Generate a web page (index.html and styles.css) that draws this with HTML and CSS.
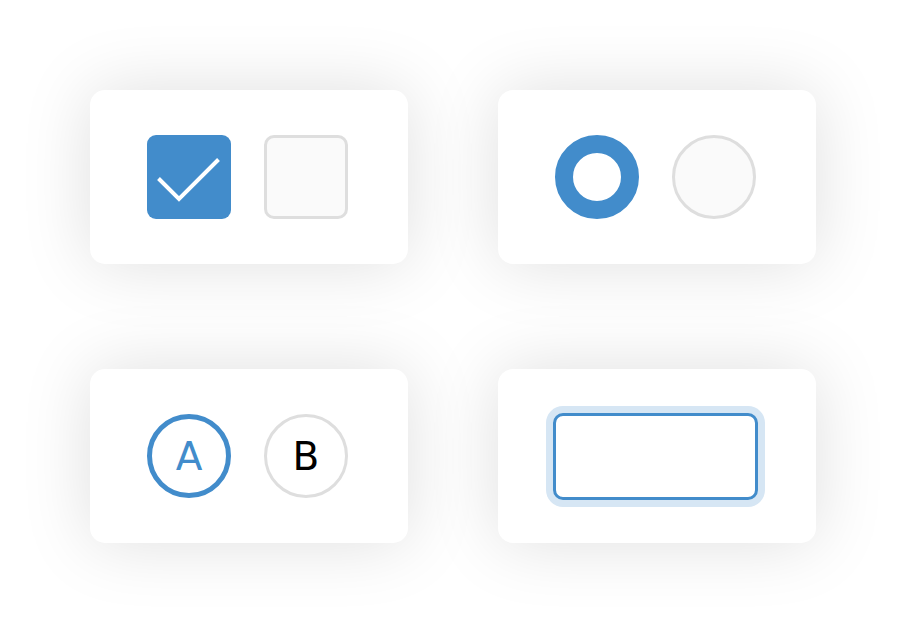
FILE: index.html
```html
<!DOCTYPE html>
<html>
<head>
<meta charset="utf-8">
<link rel="stylesheet" href="styles.css">
</head>
<body>
<div class="grid">
  <div class="card">
    <div class="check checked">
      <svg width="84" height="84" viewBox="0 0 84 84"><polyline points="11.5,43.5 32,64 71.5,24.5" fill="none" stroke="#fff" stroke-width="4"/></svg>
    </div>
    <div class="check"></div>
  </div>
  <div class="card">
    <div class="radio checked"></div>
    <div class="radio"></div>
  </div>
  <div class="card">
    <div class="letter active">A</div>
    <div class="letter">B</div>
  </div>
  <div class="card">
    <div class="input"></div>
  </div>
</div>
</body>
</html>
```
FILE: styles.css
```css
html, body {
  margin: 0;
  background: #fff;
}
.grid {
  display: grid;
  grid-template-columns: 318px 318px;
  column-gap: 90px;
  row-gap: 105px;
  padding: 90px;
}
.card {
  height: 174px;
  background: #fff;
  border-radius: 15px;
  box-shadow: 0 0 70px rgba(0, 0, 0, 0.13);
  display: flex;
  align-items: center;
  justify-content: center;
  gap: 33px;
  padding-right: 3px;
}
.check {
  width: 84px;
  height: 84px;
  box-sizing: border-box;
  border: 3px solid #dedede;
  background: #fafafa;
  border-radius: 10px;
}
.check.checked {
  border: none;
  background: #428ccb;
  border-radius: 9px;
}
.check svg { display: block; }
.radio {
  width: 84px;
  height: 84px;
  box-sizing: border-box;
  border-radius: 50%;
  border: 3px solid #dedede;
  background: #fafafa;
}
.radio.checked {
  border: 18px solid #428ccb;
  background: #fff;
}
.letter {
  width: 84px;
  height: 84px;
  box-sizing: border-box;
  border-radius: 50%;
  border: 3px solid #dedede;
  background: #fff;
  display: flex;
  align-items: center;
  justify-content: center;
  font-family: "DejaVu Sans", sans-serif;
  font-size: 39px;
  font-weight: 400;
  line-height: 1;
  color: #000;
}
.letter.active {
  border: 5px solid #428ccb;
  color: #428ccb;
}
.input {
  width: 205px;
  height: 87px;
  box-sizing: border-box;
  border: 3px solid #428ccb;
  border-radius: 10px;
  background: #fff;
  box-shadow: 0 0 0 7px #d6e6f4;
}
```
